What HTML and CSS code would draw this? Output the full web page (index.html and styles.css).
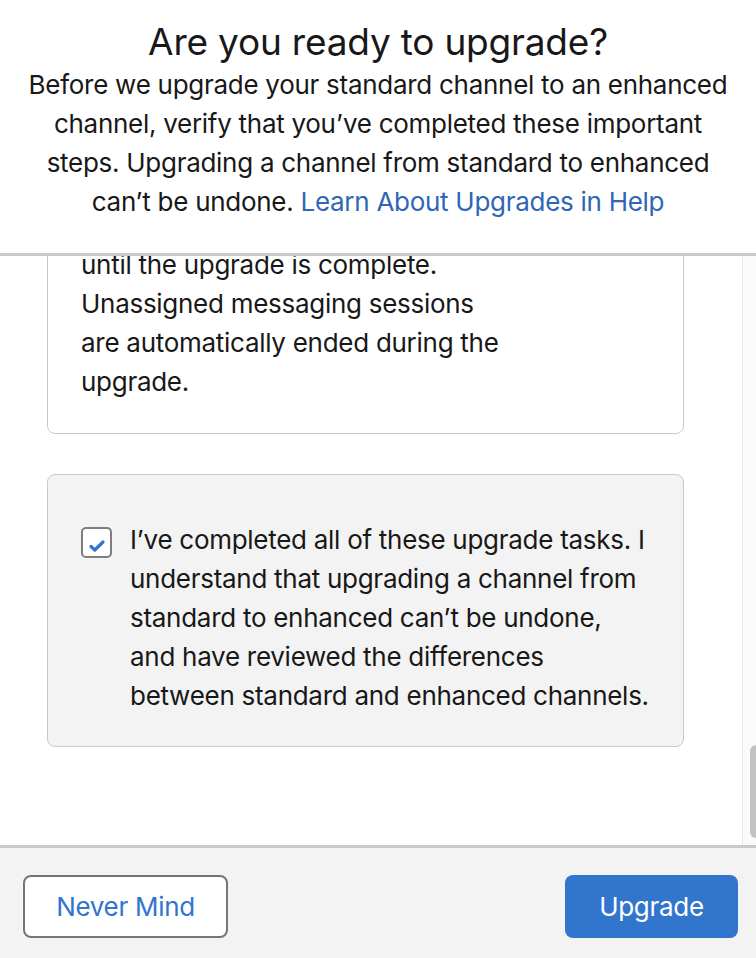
FILE: index.html
```html
<!DOCTYPE html>
<html lang="en">
<head>
<meta charset="utf-8">
<title>Are you ready to upgrade?</title>
<link rel="stylesheet" href="styles.css">
</head>
<body>
<div class="modal">
  <header class="modal-header">
    <h1 class="modal-title">Are you ready to upgrade?</h1>
    <p class="modal-intro">Before we upgrade your standard channel to an enhanced<br>channel, verify that you’ve completed these important<br>steps. Upgrading a channel from standard to enhanced<br>can’t be undone. <a class="help-link" href="#">Learn About Upgrades in Help</a></p>
  </header>

  <div class="modal-body">
    <div class="scroll-area">
      <div class="card">
        <p class="task-text">until the upgrade is complete.<br>Unassigned messaging sessions<br>are automatically ended during the<br>upgrade.</p>
      </div>

      <div class="card card-confirm">
        <label class="confirm">
          <span class="checkbox">
            <svg class="check" width="16" height="12" viewBox="0 0 16 12" aria-hidden="true">
              <path d="M2 6.5 L5.8 10 L14 2" fill="none" stroke="#2e74d0" stroke-width="3.2" stroke-linecap="round" stroke-linejoin="round"/>
            </svg>
          </span>
          <span class="confirm-text">I’ve completed all of these upgrade tasks. I<br>understand that upgrading a channel from<br>standard to enhanced can’t be undone,<br>and have reviewed the differences<br>between standard and enhanced channels.</span>
        </label>
      </div>
    </div>
    <div class="scrollbar"><div class="thumb"></div></div>
  </div>

  <footer class="modal-footer">
    <button class="btn btn-neutral" type="button">Never Mind</button>
    <button class="btn btn-brand" type="button">Upgrade</button>
  </footer>
</div>
</body>
</html>
```

FILE: styles.css
```css
* { box-sizing: border-box; }

html, body {
  margin: 0;
  padding: 0;
  background: #ffffff;
}

body {
  font-family: Inter, "Noto Sans", "Liberation Sans", sans-serif;
  color: #181818;
  font-size: 26px;
  line-height: 39px;
  letter-spacing: -0.28px;
}

.modal {
  width: 756px;
  height: 958px;
  display: flex;
  flex-direction: column;
  overflow: hidden;
}

.modal-header {
  flex: none;
  padding: 19px 10px 32px;
  text-align: center;
  border-bottom: 3px solid #c9c9c9;
  background: #ffffff;
}

.modal-title {
  margin: 0;
  font-size: 37px;
  line-height: 46px;
  font-weight: 400;
  letter-spacing: -0.2px;
  color: #181818;
}

.modal-intro {
  margin: 0;
  font-size: 26px;
  line-height: 39px;
  white-space: nowrap;
}

.help-link {
  color: #2f66b6;
  text-decoration: none;
}

.modal-body {
  flex: 1;
  min-height: 0;
  display: flex;
  background: #ffffff;
}

.scroll-area {
  flex: 1;
  min-width: 0;
  overflow: hidden;
  display: flex;
  flex-direction: column;
  justify-content: flex-end;
  gap: 40px;
  padding: 0 58px 98px 47px;
}

.card {
  flex: none;
  border: 1px solid #c9c9c9;
  border-radius: 8px;
  background: #ffffff;
  padding: 20px 33px 32px;
}

.task-text {
  margin: 0;
  white-space: nowrap;
}

.card-confirm {
  background: #f3f3f3;
  padding: 45px 33px 31px;
}

.confirm {
  display: flex;
  align-items: flex-start;
  gap: 18px;
}

.checkbox {
  flex: none;
  width: 31px;
  height: 31px;
  margin-top: 7px;
  border: 2px solid #7e7e7e;
  border-radius: 5px;
  background: #ffffff;
  display: flex;
  justify-content: center;
  align-items: flex-end;
  padding-bottom: 4px;
}

.check {
  display: block;
}

.confirm-text {
  display: block;
  white-space: nowrap;
}

.scrollbar {
  flex: none;
  width: 14px;
  border-left: 1px solid #e8e8e8;
  background: #fafafa;
  display: flex;
  flex-direction: column;
  justify-content: flex-end;
  padding-bottom: 7px;
  overflow: hidden;
}

.thumb {
  width: 12px;
  height: 93px;
  margin-left: 7px;
  border-radius: 6px;
  background: #c2c2c2;
  flex: none;
}

.modal-footer {
  flex: none;
  height: 113px;
  border-top: 3px solid #c9c9c9;
  background: #f3f3f3;
  padding: 27px 18px 0 23px;
  display: flex;
  justify-content: space-between;
  align-items: flex-start;
}

.btn {
  height: 63px;
  border-radius: 8px;
  font-family: Inter, "Noto Sans", "Liberation Sans", sans-serif;
  font-size: 26px;
  line-height: 30px;
  letter-spacing: -0.3px;
  padding: 0;
  cursor: pointer;
}

.btn-neutral {
  width: 205px;
  background: #ffffff;
  border: 2px solid #757575;
  color: #3174d0;
}

.btn-brand {
  width: 173px;
  background: #3275cd;
  border: 0;
  color: #ffffff;
}
```
